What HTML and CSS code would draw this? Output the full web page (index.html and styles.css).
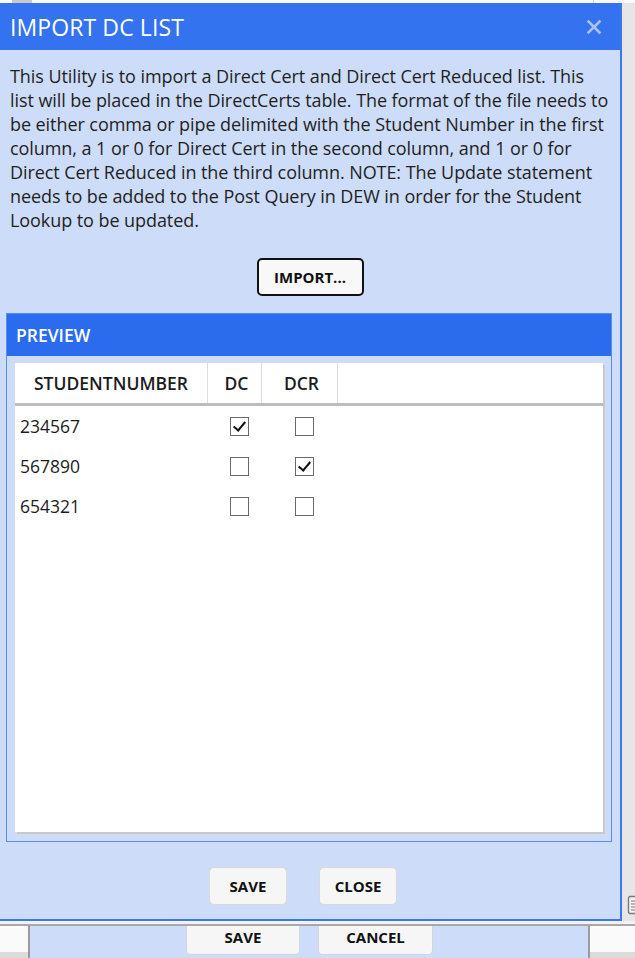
FILE: index.html
```html
<!DOCTYPE html>
<html>
<head>
<meta charset="utf-8">
<link rel="stylesheet" href="styles.css">
</head>
<body>
<div class="page">
  <div class="topstrip"><span class="tab"></span><span class="tabline"></span></div>
  <div class="backdrop">
    <svg class="side-icon" width="12" height="20" viewBox="0 0 12 20"><rect x="1.5" y="1.5" width="14" height="17" rx="1.5" fill="#f4f4f4" stroke="#7a7a7a" stroke-width="1.4"/><path d="M4 6h8M4 9h8M4 12h8M4 15h8" stroke="#7a7a7a" stroke-width="1.2"/></svg>
  </div>
  <div class="sep"></div>
  <div class="bottombar">
    <div class="bb-left"></div>
    <div class="bb-panel">
      <button class="bb-btn">SAVE</button>
      <button class="bb-btn">CANCEL</button>
    </div>
    <div class="bb-right"></div>
  </div>
</div>

<div class="dialog">
  <div class="titlebar">
    <span class="title">IMPORT DC LIST</span>
    <svg class="close" width="16" height="16" viewBox="0 0 16 16"><path d="M2.5 2.5l11 11M13.5 2.5l-11 11" stroke="#a9c3f6" stroke-width="2.6" stroke-linecap="square"/></svg>
  </div>
  <div class="body">
    <p class="desc">This Utility is to import a Direct Cert and Direct Cert Reduced list. This<br>list will be placed in the DirectCerts table. The format of the file needs to<br>be either comma or pipe delimited with the Student Number in the first<br>column, a 1 or 0 for Direct Cert in the second column, and 1 or 0 for<br>Direct Cert Reduced in the third column. NOTE: The Update statement<br>needs to be added to the Post Query in DEW in order for the Student<br>Lookup to be updated.</p>
    <div class="import-row"><button class="import-btn">IMPORT...</button></div>
    <div class="group">
      <div class="group-head">PREVIEW</div>
      <div class="group-body">
        <div class="grid">
          <div class="grow ghead">
            <div class="c c1">STUDENTNUMBER</div>
            <div class="c c2">DC</div>
            <div class="c c3">DCR</div>
            <div class="c c4"></div>
          </div>
          <div class="grow">
            <div class="c c1 num">234567</div>
            <div class="c c2"><span class="cb on"></span></div>
            <div class="c c3"><span class="cb"></span></div>
          </div>
          <div class="grow">
            <div class="c c1 num">567890</div>
            <div class="c c2"><span class="cb"></span></div>
            <div class="c c3"><span class="cb on"></span></div>
          </div>
          <div class="grow">
            <div class="c c1 num">654321</div>
            <div class="c c2"><span class="cb"></span></div>
            <div class="c c3"><span class="cb"></span></div>
          </div>
        </div>
      </div>
    </div>
    <div class="footer">
      <button class="ft-btn">SAVE</button>
      <button class="ft-btn">CLOSE</button>
    </div>
  </div>
</div>
</body>
</html>
```

FILE: styles.css
```css
* { box-sizing: border-box; }
html, body { margin: 0; padding: 0; }
body {
  width: 635px;
  height: 958px;
  overflow: hidden;
  font-family: "Open Sans", "Noto Sans", sans-serif;
  background: #e6e6e6;
  position: relative;
}
button { font-family: inherit; cursor: default; }

.page { display: flex; flex-direction: column; height: 958px; }
.topstrip { height: 3px; background: #fafafa; position: relative; display: flex; }
.tab { width: 20px; height: 3px; margin-left: 12px; background: #c9c9c9; }
.tabline { width: 1px; height: 3px; margin-left: 561px; background: #d0d0d0; }
.backdrop {
  height: 918px;
  background: #e6e6e6;
  display: flex;
  justify-content: flex-end;
  align-items: flex-end;
  padding-bottom: 6px;
}
.side-icon { display: block; margin-right: -4px; }
.sep { height: 5px; background: #f3f3f3; border-bottom: 2px solid #a9a9a9; }
.bottombar { height: 32px; display: flex; }
.bb-left { width: 28px; background: #fafafa; border-bottom: 6px solid #dcdcdc; }
.bb-panel {
  width: 562px;
  background: #cddcf8;
  border-left: 2px solid #9a9a9a;
  border-right: 2px solid #9a9a9a;
  display: flex;
  gap: 18px;
  padding-left: 156px;
}
.bb-right { flex: 1; background: #fafafa; border-bottom: 6px solid #dcdcdc; }
.bb-btn {
  height: 29px;
  padding: 0;
  background: #f6f6f6;
  border: 1px solid #d6d6d6;
  border-top: none;
  border-radius: 0 0 5px 5px;
  font-size: 15px;
  font-weight: 700;
  color: #111;
  padding-bottom: 6px;
}
.bb-btn:first-child { width: 114px; }
.bb-btn:last-child { width: 115px; }

.dialog {
  position: absolute;
  top: 3px;
  left: 0;
  width: 622px;
  height: 918px;
  background: #cddcf8;
  border-right: 2px solid #3b78ef;
  border-bottom: 2px solid #3b78ef;
  display: flex;
  flex-direction: column;
}
.titlebar {
  height: 47px;
  background: #3472ef;
  display: flex;
  align-items: center;
  justify-content: space-between;
  padding: 0 18px 0 10px;
}
.title { color: #fff; font-size: 23px; font-weight: 400; letter-spacing: 0.1px; }
.close { display: block; }
.body { padding: 14px 0 0; display: flex; flex-direction: column; }
.desc {
  margin: 0;
  padding-left: 10px;
  font-size: 18px;
  line-height: 24px;
  color: #1f1f1f;
  white-space: nowrap;
  letter-spacing: -0.07px;
}
.import-row { display: flex; justify-content: center; margin-top: 26px; }
.import-btn {
  width: 107px;
  height: 38px;
  background: #f8f8f8;
  border: 2px solid #111;
  border-radius: 5px;
  font-size: 15px;
  font-weight: 700;
  color: #111;
  padding: 0;
}
.group {
  margin: 17px 8px 0 6px;
  height: 529px;
  border: 1px solid #5a8cee;
  display: flex;
  flex-direction: column;
}
.group-head {
  height: 42px;
  background: #2b6cee;
  color: #fff;
  font-size: 17.5px;
  font-weight: 600;
  padding-left: 9px;
  display: flex;
  align-items: center;
}
.group-body { flex: 1; padding: 7px 8px 9px 8px; display: flex; }
.grid {
  flex: 1;
  background: #fff;
  box-shadow: 2px 2px 0 #c9c9c9;
}
.grow { display: flex; height: 40px; align-items: center; }
.ghead {
  height: 43px;
  border-bottom: 3px solid #bdbdbd;
  align-items: stretch;
}
.c { display: flex; align-items: center; justify-content: center; font-size: 17.5px; color: #1c1c1c; }
.ghead .c { font-weight: 600; font-size: 17.5px; border-right: 1px solid #dedede; }
.ghead .c4 { border-right: none; flex: 1; }
.c1 { width: 193px; }
.c2 { width: 54px; padding-left: 8px; }
.c3 { width: 76px; padding-left: 8px; }
.ghead .c2, .ghead .c3 { padding-left: 4px; }
.grow .num { justify-content: flex-start; padding-left: 5px; }
.cb {
  width: 19px;
  height: 19px;
  border: 1px solid #6a6a6a;
  background: #fff;
  position: relative;
  display: block;
}
.cb.on::after {
  content: "";
  position: absolute;
  left: 5px;
  top: 1px;
  width: 5px;
  height: 10px;
  border-right: 2px solid #111;
  border-bottom: 2px solid #111;
  transform: rotate(40deg);
}
.footer {
  margin-top: 25px;
  display: flex;
  justify-content: center;
  gap: 32px;
  padding-right: 14px;
}
.ft-btn {
  width: 78px;
  height: 38px;
  background: #f6f6f6;
  border: 1px solid #d8d8d8;
  border-radius: 5px;
  font-size: 15px;
  font-weight: 700;
  color: #111;
  padding: 0;
}
```
